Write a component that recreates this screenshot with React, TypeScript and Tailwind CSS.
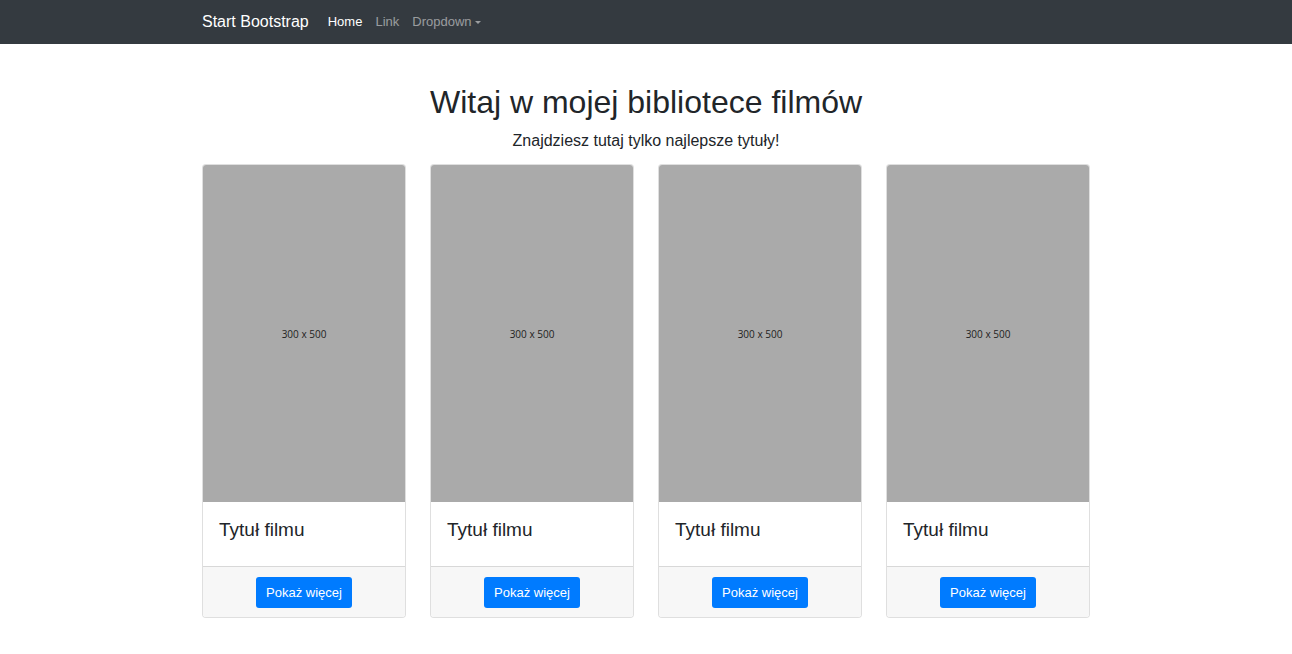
import React from "react";

function Card() {
  return (
    <div className="flex flex-col rounded border border-[rgba(0,0,0,0.125)] overflow-hidden bg-white">
      <div className="h-[337px] bg-[#aaaaaa] flex items-center justify-center">
        <span className="text-[10px] text-[#222] pt-[1px]" style={{ fontFamily: "'Open Sans', sans-serif" }}>300 x 500</span>
      </div>
      <div className="h-[64px] px-[16px] pt-[16px]">
        <h5 className="text-[19px] leading-[24px] text-[#212529]">Tytuł filmu</h5>
      </div>
      <div className="border-t border-[rgba(0,0,0,0.125)] bg-[#f7f7f7] flex justify-center pt-[10px] pb-[9px]">
        <button className="bg-[#007bff] text-white text-[13px] leading-[21px] px-[10px] py-[5px] rounded-[3px]">Pokaż więcej</button>
      </div>
    </div>
  );
}

export default function App() {
  return (
    <div className="min-h-[654px] bg-white" style={{ fontFamily: "'Liberation Sans', Arial, sans-serif" }}>
      <nav className="h-[44px] bg-[#343a40]">
        <div className="w-[888px] mx-auto h-full flex items-center">
          <span className="text-white text-[16px] mr-[19px]">Start Bootstrap</span>
          <span className="text-white text-[13px] mr-[13px]">Home</span>
          <span className="text-[rgba(255,255,255,0.5)] text-[13px] mr-[13px]">Link</span>
          <span className="text-[rgba(255,255,255,0.5)] text-[13px] flex items-center">
            Dropdown
            <span className="ml-[3px] inline-block w-0 h-0 border-l-[3px] border-r-[3px] border-t-[3px] border-l-transparent border-r-transparent border-t-[rgba(255,255,255,0.5)]"></span>
          </span>
        </div>
      </nav>
      <div className="w-[888px] mx-auto">
        <h1 className="text-center text-[32px] leading-[38px] text-[#212529] pt-[39px]">Witaj w mojej bibliotece filmów</h1>
        <p className="text-center text-[16px] leading-[24px] text-[#212529] mt-[8px]">Znajdziesz tutaj tylko najlepsze tytuły!</p>
        <div className="grid grid-cols-4 gap-[24px] mt-[11px]">
          <Card />
          <Card />
          <Card />
          <Card />
        </div>
      </div>
    </div>
  );
}
